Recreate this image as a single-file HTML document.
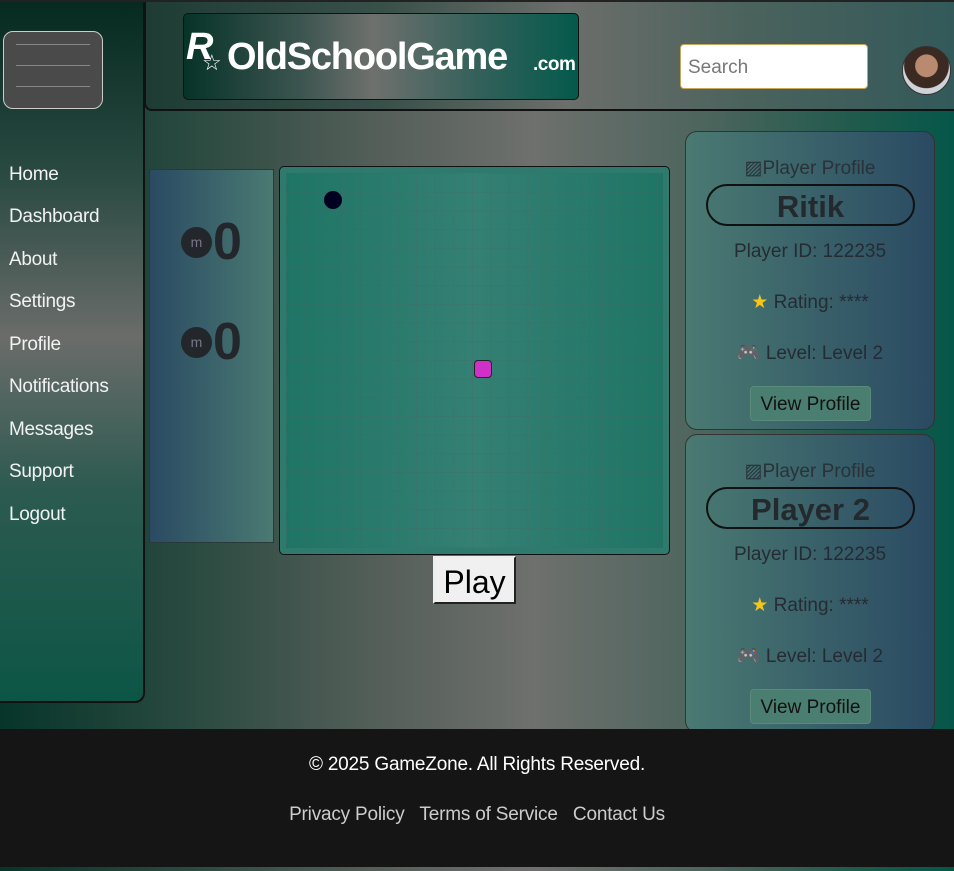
<!DOCTYPE html>
<html><head><meta charset="utf-8"><style>
*{box-sizing:border-box;margin:0;padding:0}
body{width:954px;height:871px;overflow:hidden;font-family:"Segoe UI","Liberation Sans",sans-serif;background:#222;position:relative}
.bg{position:absolute;left:0;top:2px;width:954px;height:869px;background:linear-gradient(90deg,#07352a 0%,#2a4a40 20%,#555f5a 40%,#6e706d 56%,#4a645c 75%,#1f5a4c 90%,#05574a 100%)}
.side{position:absolute;left:0;top:2px;width:145px;height:701px;border:2px solid #111;border-left:none;border-top:none;border-radius:0 0 10px 0;background:linear-gradient(180deg,#062a20 0%,#2a4a42 25%,#6a6c6a 48%,#2c5a50 70%,#0c5646 100%)}
.ham{position:absolute;left:3px;top:29px;width:100px;height:78px;border:1px solid #ccc;border-radius:10px;background:#4a4a4a}
.ham i{position:absolute;left:12px;width:74px;height:1px;background:#888}
.nav{position:absolute;left:9px;color:#f2f2f2;font-size:19px;letter-spacing:-.3px}
.head{position:absolute;left:144px;top:2px;width:810px;height:109px;border-bottom:2px solid #111;border-left:2px solid #111;border-radius:0 0 0 8px;background:linear-gradient(90deg,#1e3c34 0%,#3a514a 30%,#6c6e6b 52%,#4a625c 75%,#33595a 100%)}
.logo{position:absolute;left:183px;top:13px;width:396px;height:87px;border:1px solid #111;border-radius:5px;background:linear-gradient(90deg,#073328 0%,#3d5550 30%,#6e706d 48%,#33605a 75%,#045a4c 100%);color:#fff;font-weight:bold}
.search{position:absolute;left:680px;top:44px;width:188px;height:45px;background:#fff;border:1px solid #c9a55a;border-radius:4px;font-size:19px;color:#777;padding:12px 7px}
.av{position:absolute;left:902px;top:46px;width:49px;height:49px;border-radius:50%;background:radial-gradient(circle at 50% 40%,#b98a70 0 30%,#3a2a22 32% 60%,#cfd2d6 62%);border:1px solid #333}
.score{position:absolute;left:149px;top:169px;width:125px;height:374px;border:1px solid #2a3a3a;background:linear-gradient(90deg,#2a4a62,#4a7a72)}
.sc{position:absolute;left:31px;font-size:52px;font-weight:bold;color:#23262b;display:flex;align-items:center}
.sc b{display:inline-block;width:31px;height:31px;border-radius:50%;background:#23262b;margin-right:1px;color:#778;font-size:14px;text-align:center;line-height:30px;font-weight:normal}
.board{position:absolute;left:279px;top:166px;width:391px;height:389px;border:1px solid #111;border-radius:5px;background:#2e7a6c;padding:6px}
.grid{width:100%;height:100%;background-color:#2a7a68;background-image:linear-gradient(rgba(90,90,90,.22) 1px,transparent 1px),linear-gradient(90deg,rgba(90,90,90,.22) 1px,transparent 1px),linear-gradient(90deg,#1f7565,#348074 50%,#1f7565);background-size:18.6px 18.7px,18.6px 18.7px,100% 100%}
.play{position:absolute;left:433px;top:556px;width:83px;height:48px;background:#f0f0f0;border:2px solid #222;border-top-color:#eee;border-left-color:#eee;font-size:32px;text-align:center;line-height:48px;color:#000}
.card{position:absolute;left:685px;width:250px;height:299px;border:1px solid #333;border-radius:12px;background:linear-gradient(90deg,#4a7a72,#2a4a62);text-align:center;color:#252b33;font-size:19px}
.card .ph{position:absolute;top:25px;left:0;width:100%;color:#283238}
.card .nm{position:absolute;left:20px;top:52px;width:209px;height:42px;border:2px solid #111;border-radius:21px;font-size:31px;font-weight:bold;line-height:42px;color:#24292e}
.card .r{position:absolute;left:0;width:100%}
.card .btn{position:absolute;left:64px;top:254px;width:121px;height:35px;background:#4a7e70;border:1px solid #5a8a7c;border-radius:4px;line-height:36px;color:#111}
.foot{position:absolute;left:0;top:729px;width:954px;height:138px;background:#151515;color:#fff;text-align:center}
</style></head><body>
<div class="bg"></div>
<div class="side">
<div class="ham"><i style="top:12px"></i><i style="top:33px"></i><i style="top:54px"></i></div>
<div class="nav" style="top:162px">Home</div>
<div class="nav" style="top:204px">Dashboard</div>
<div class="nav" style="top:247px">About</div>
<div class="nav" style="top:289px">Settings</div>
<div class="nav" style="top:332px">Profile</div>
<div class="nav" style="top:374px">Notifications</div>
<div class="nav" style="top:417px">Messages</div>
<div class="nav" style="top:459px">Support</div>
<div class="nav" style="top:502px">Logout</div>
</div>
<div class="head"></div>
<div class="logo"><span style="position:absolute;left:2px;top:12px;font-size:38px;font-style:italic">R</span><span style="position:absolute;left:18px;top:36px;font-size:22px;font-weight:normal">☆</span><span style="position:absolute;left:43px;top:22px;font-size:38px;letter-spacing:-1.2px">OldSchoolGame</span><span style="position:absolute;left:349px;top:40px;font-size:19px;letter-spacing:-.5px">.com</span></div>
<div class="search">Search</div>
<div class="av"></div>
<div class="score">
<div class="sc" style="top:42px"><b>m</b>0</div>
<div class="sc" style="top:142px"><b>m</b>0</div>
</div>
<div class="board"><div class="grid"></div>
<div style="position:absolute;left:44px;top:24px;width:18px;height:18px;border-radius:50%;background:#000020"></div>
<div style="position:absolute;left:194px;top:193px;width:18px;height:18px;border-radius:4px;background:#d030c8;border:1px solid #222"></div>
</div>
<div class="play">Play</div>
<div class="card" style="top:131px">
<div class="ph">▨Player Profile</div>
<div class="nm">Ritik</div>
<div class="r" style="top:109px">Player ID: 122235</div>
<div class="r" style="top:159px"><span style="color:#f5c518">★</span> Rating: ****</div>
<div class="r" style="top:209px"><span style="color:#6a3a8a">🎮</span> Level: Level 2</div>
<div class="btn">View Profile</div>
</div>
<div class="card" style="top:434px">
<div class="ph">▨Player Profile</div>
<div class="nm">Player 2</div>
<div class="r" style="top:109px">Player ID: 122235</div>
<div class="r" style="top:159px"><span style="color:#f5c518">★</span> Rating: ****</div>
<div class="r" style="top:209px"><span style="color:#6a3a8a">🎮</span> Level: Level 2</div>
<div class="btn">View Profile</div>
</div>
<div class="foot">
<div style="position:absolute;top:25px;width:100%;font-size:19px;letter-spacing:-.2px">© 2025 GameZone. All Rights Reserved.</div>
<div style="position:absolute;top:75px;width:100%;font-size:19px;color:#ccc;letter-spacing:-.2px">Privacy Policy &nbsp; Terms of Service &nbsp; Contact Us</div>
</div>
</body></html>
